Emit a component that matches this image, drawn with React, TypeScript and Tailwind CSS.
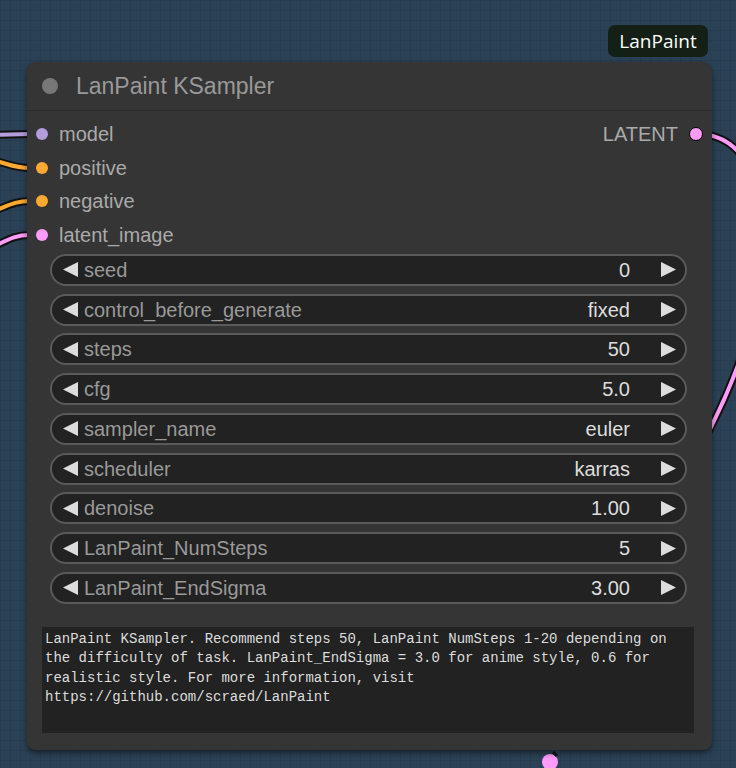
import React from "react";

const inputs = [
  { name: "model", color: "bg-[#b39ddb]" },
  { name: "positive", color: "bg-[#ffa931]" },
  { name: "negative", color: "bg-[#ffa931]" },
  { name: "latent_image", color: "bg-[#ff9cf9]" },
];

const widgets = [
  ["seed", "0"],
  ["control_before_generate", "fixed"],
  ["steps", "50"],
  ["cfg", "5.0"],
  ["sampler_name", "euler"],
  ["scheduler", "karras"],
  ["denoise", "1.00"],
  ["LanPaint_NumSteps", "5"],
  ["LanPaint_EndSigma", "3.00"],
];

function Arrow({ dir }: { dir: "l" | "r" }) {
  return (
    <svg width="17" height="17" viewBox="0 0 17 17" className="shrink-0">
      {dir === "l" ? (
        <polygon points="16,1 16,16 1,8.5" fill="#dddddd" />
      ) : (
        <polygon points="1,1 1,16 16,8.5" fill="#dddddd" />
      )}
    </svg>
  );
}

export default function App() {
  return (
    <div
      className="relative w-[736px] h-[768px] overflow-hidden bg-[#2b4256] bg-[linear-gradient(rgba(0,0,0,0.07)_1px,transparent_1px),linear-gradient(90deg,rgba(0,0,0,0.07)_1px,transparent_1px)] bg-[size:10px_10px]"
      style={{ fontFamily: "Arial, 'Liberation Sans', sans-serif" }}
    >
      {/* wires */}
      <svg className="absolute inset-0" width="736" height="768">
        <g fill="none" strokeLinecap="round">
          <path d="M-10 135 L30 134" stroke="#111" strokeWidth="8" />
          <path d="M-10 135 L30 134" stroke="#b39ddb" strokeWidth="4" />
          <path d="M-10 160 C5 162 12 168 30 168" stroke="#111" strokeWidth="8" />
          <path d="M-10 160 C5 162 12 168 30 168" stroke="#ffa931" strokeWidth="4" />
          <path d="M-10 212 C5 208 12 201 30 201" stroke="#111" strokeWidth="8" />
          <path d="M-10 212 C5 208 12 201 30 201" stroke="#ffa931" strokeWidth="4" />
          <path d="M-10 248 C5 242 12 235 30 235" stroke="#111" strokeWidth="8" />
          <path d="M-10 248 C5 242 12 235 30 235" stroke="#ff9cf9" strokeWidth="4" />
          <path d="M697 134 C775 134 790 270 712 425 L560 740" stroke="#111" strokeWidth="8" />
          <path d="M697 134 C775 134 790 270 712 425 L560 740" stroke="#ff9cf9" strokeWidth="4" />
        </g>
        <circle cx="550" cy="762" r="8" fill="#ff9cf9" />
        <path d="M553 752 L557 756" stroke="#111" strokeWidth="3" />
      </svg>

      {/* badge */}
      <div
        className="absolute left-[608px] top-[25px] w-[100px] h-[32px] rounded-[7px] bg-[#142015] text-white text-[19px] font-medium flex items-center justify-center"
        style={{ fontFamily: "'Open Sans', 'Noto Sans', sans-serif" }}
      >
        LanPaint
      </div>

      {/* node */}
      <div className="absolute left-[27px] top-[62px] w-[685px] h-[688px] rounded-[9px] bg-[#353535] shadow-[0_3px_6px_rgba(0,0,0,0.5)] flex flex-col">
        <div className="h-[49px] shrink-0 flex items-center border-b border-[#2a2a2a]">
          <div className="ml-[15px] w-[16px] h-[16px] rounded-full bg-[#777777]" />
          <div className="ml-[18px] text-[23px] text-[#999999]">LanPaint KSampler</div>
        </div>

        <div className="pt-[6px] flex flex-col">
          {inputs.map((inp, i) => (
            <div key={inp.name} className="h-[33.7px] flex items-center">
              <div className={`ml-[9px] w-[12px] h-[12px] rounded-full ${inp.color}`} />
              <div className="ml-[11px] text-[20px] text-[#aaaaaa]">{inp.name}</div>
              {i === 0 && (
                <div className="ml-auto mr-[9px] flex items-center">
                  <span className="text-[20px] text-[#aaaaaa]">LATENT</span>
                  <div className="ml-[11px] w-[14px] h-[14px] rounded-full bg-[#ff9cf9] border border-black" />
                </div>
              )}
            </div>
          ))}
        </div>

        <div className="mt-[2px] ml-[23px] mr-[25px] flex flex-col gap-[7.75px]">
          {widgets.map(([label, value]) => (
            <div
              key={label}
              className="h-[32px] rounded-full border-2 border-[#5a5a5a] bg-[#222222] flex items-center pl-[10px] pr-[8px]"
            >
              <Arrow dir="l" />
              <span className="ml-[5px] text-[20px] text-[#999999]">{label}</span>
              <span className="ml-auto text-[20px] text-[#dddddd]">{value}</span>
              <span className="ml-[30px]">
                <Arrow dir="r" />
              </span>
            </div>
          ))}
        </div>

        <div
          className="mt-[23px] ml-[15px] mr-[18px] h-[106px] bg-[#222222] px-[3px] pt-[3px] text-[14px] leading-[19.5px] text-[#dddddd] whitespace-pre-wrap"
          style={{ fontFamily: "'Liberation Mono', monospace" }}
        >
          {"LanPaint KSampler. Recommend steps 50, LanPaint NumSteps 1-20 depending on\nthe difficulty of task. LanPaint_EndSigma = 3.0 for anime style, 0.6 for\nrealistic style. For more information, visit\nhttps://github.com/scraed/LanPaint"}
        </div>
      </div>
    </div>
  );
}
